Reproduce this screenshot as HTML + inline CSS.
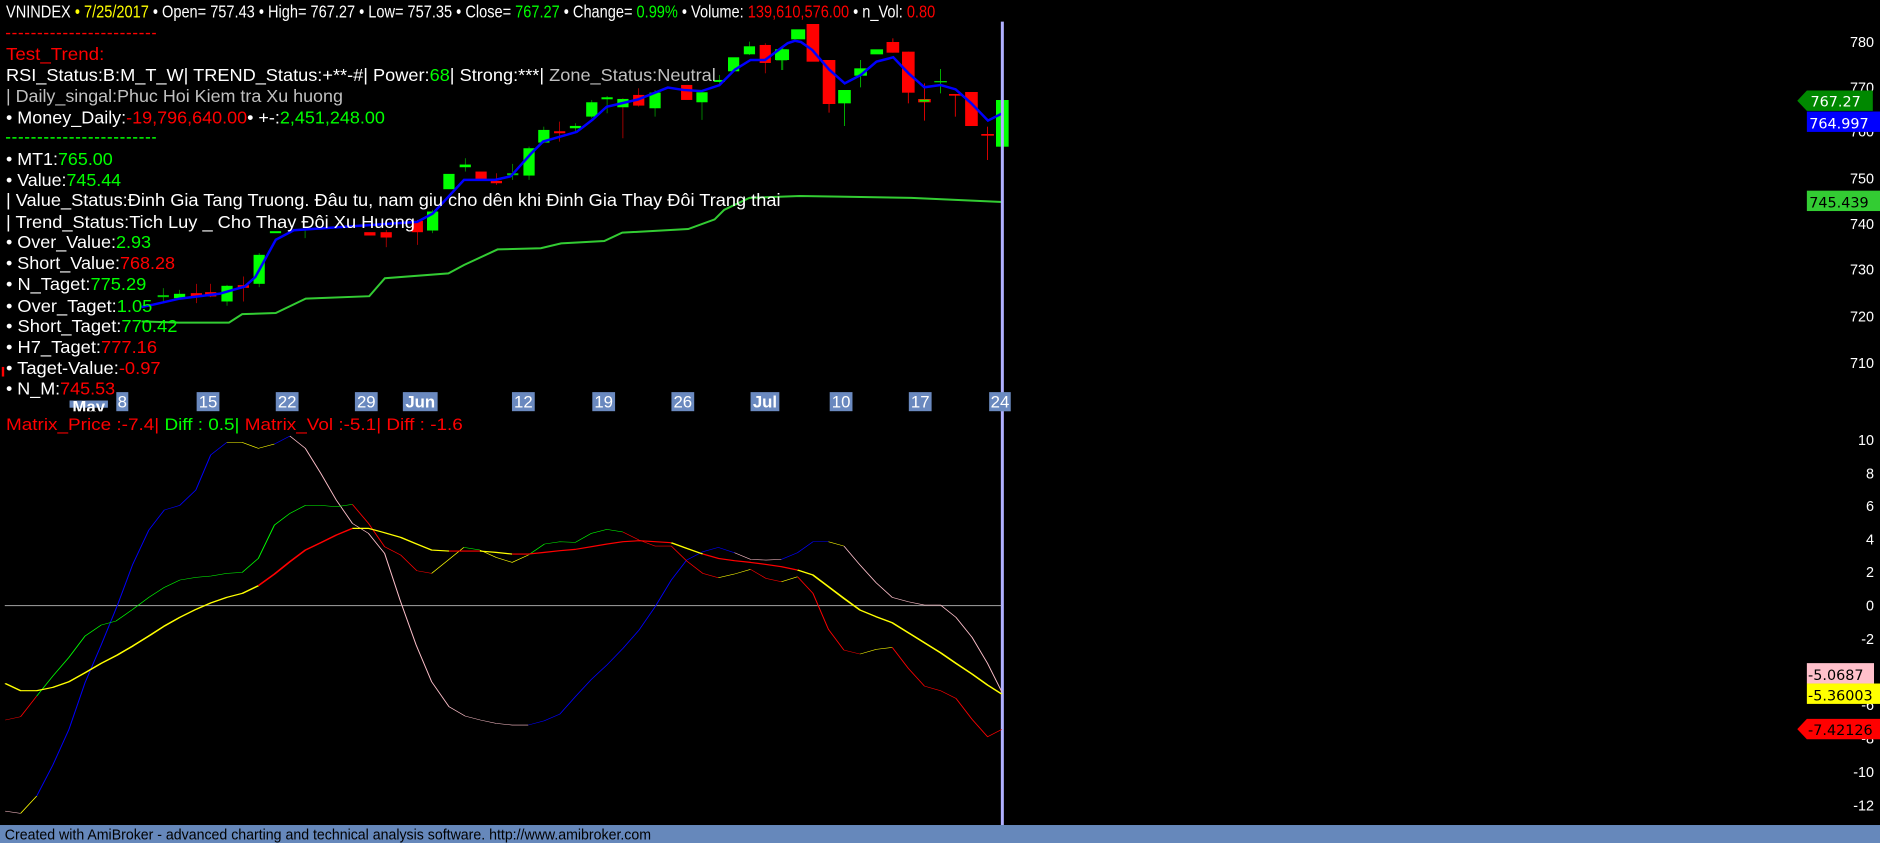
<!DOCTYPE html>
<html><head><meta charset="utf-8"><style>
html,body{margin:0;padding:0;background:#000;overflow:hidden}
svg{display:block}
text{font-family:"Liberation Sans",Arial,sans-serif}
.ax{font-family:"DejaVu Sans",sans-serif;font-size:12px;fill:#fff}
.w{fill:#fff}.g{fill:#00ff00}.r{fill:#ff0000}.y{fill:#ffff00}.gr{fill:#c0c0c0}
.ns{vector-effect:non-scaling-stroke;fill:none}
</style></head><body>
<svg width="1880" height="843" viewBox="0 0 1568 703" preserveAspectRatio="none" xmlns="http://www.w3.org/2000/svg">
<rect width="1568" height="703" fill="#000"/>

<polyline class="ns" stroke="#33cc33" stroke-width="2" points="118,268 149,269 191,269 202,262 230,261 255,249 308,247 321,232 374,228 387,221 415,208 451,207 468,203 504,201 519,194 574,191 596,183 604,175 625,165 667,163.5 700,164 760,165 836,168.5"/>

<g transform="scale(0.4255,0.2778)">
<g stroke-width="1.2" class="ns">
<line x1="320" y1="865" x2="320" y2="905" stroke="#00cc00"/>
<line x1="352" y1="870" x2="352" y2="897" stroke="#00cc00"/>
<line x1="385" y1="852" x2="385" y2="910" stroke="#ff0000"/>
<line x1="413" y1="852" x2="413" y2="892" stroke="#ff0000"/>
<line x1="445" y1="855" x2="445" y2="918" stroke="#00cc00"/>
<line x1="477" y1="830" x2="477" y2="905" stroke="#ff0000"/>
<line x1="508" y1="760" x2="508" y2="862" stroke="#00cc00"/>
<line x1="598" y1="690" x2="598" y2="715" stroke="#00cc00"/>
<line x1="757" y1="690" x2="757" y2="742" stroke="#ff0000"/>
<line x1="818" y1="660" x2="818" y2="735" stroke="#ff0000"/>
<line x1="848" y1="630" x2="848" y2="700" stroke="#00cc00"/>
<line x1="912" y1="475" x2="912" y2="515" stroke="#00cc00"/>
<line x1="973" y1="520" x2="973" y2="555" stroke="#ff0000"/>
<line x1="1005" y1="492" x2="1005" y2="540" stroke="#00cc00"/>
<line x1="1037" y1="440" x2="1037" y2="540" stroke="#00cc00"/>
<line x1="1066" y1="380" x2="1066" y2="430" stroke="#00cc00"/>
<line x1="1097" y1="365" x2="1097" y2="425" stroke="#ff0000"/>
<line x1="1128" y1="370" x2="1128" y2="400" stroke="#00cc00"/>
<line x1="1160" y1="300" x2="1160" y2="355" stroke="#00cc00"/>
<line x1="1190" y1="288" x2="1190" y2="340" stroke="#00cc00"/>
<line x1="1221" y1="295" x2="1221" y2="415" stroke="#ff0000"/>
<line x1="1252" y1="265" x2="1252" y2="320" stroke="#ff0000"/>
<line x1="1284" y1="270" x2="1284" y2="350" stroke="#00cc00"/>
<line x1="1376" y1="275" x2="1376" y2="360" stroke="#00cc00"/>
<line x1="1410" y1="225" x2="1410" y2="250" stroke="#00cc00"/>
<line x1="1469" y1="125" x2="1469" y2="165" stroke="#00cc00"/>
<line x1="1500" y1="130" x2="1500" y2="220" stroke="#ff0000"/>
<line x1="1532" y1="140" x2="1532" y2="210" stroke="#00cc00"/>
</g>
<g>
<rect x="309" y="886" width="22" height="6" fill="#00cc00"/>
<rect x="341" y="882" width="22" height="13" fill="#00ff00"/>
<rect x="374" y="880" width="22" height="10" fill="#ff0000"/>
<rect x="402" y="877" width="22" height="13" fill="#ff0000"/>
<rect x="434" y="858" width="22" height="47" fill="#00ff00"/>
<rect x="466" y="856" width="22" height="8" fill="#ff0000"/>
<rect x="497" y="765" width="22" height="87" fill="#00ff00"/>
<rect x="529" y="694" width="22" height="6" fill="#00ff00"/>
<rect x="714" y="697" width="22" height="10" fill="#ff0000"/>
<rect x="746" y="697" width="22" height="16" fill="#ff0000"/>
<rect x="807" y="663" width="22" height="34" fill="#ff0000"/>
<rect x="837" y="635" width="22" height="57" fill="#00ff00"/>
<rect x="869" y="522" width="22" height="46" fill="#00ff00"/>
<rect x="901" y="494" width="22" height="8" fill="#00ff00"/>
<rect x="932" y="515" width="22" height="25" fill="#ff0000"/>
<rect x="962" y="543" width="22" height="7" fill="#ff0000"/>
<rect x="994" y="520" width="22" height="6" fill="#00cc00"/>
<rect x="1026" y="445" width="22" height="82" fill="#00ff00"/>
<rect x="1055" y="390" width="22" height="38" fill="#00ff00"/>
<rect x="1086" y="394" width="22" height="6" fill="#ff0000"/>
<rect x="1117" y="378" width="22" height="7" fill="#00ff00"/>
<rect x="1149" y="307" width="22" height="43" fill="#00ff00"/>
<rect x="1179" y="292" width="22" height="6" fill="#00ff00"/>
<rect x="1210" y="297" width="22" height="25" fill="#00ff00"/>
<rect x="1241" y="285" width="22" height="32" fill="#ff0000"/>
<rect x="1273" y="278" width="22" height="47" fill="#00ff00"/>
<rect x="1335" y="255" width="22" height="45" fill="#ff0000"/>
<rect x="1365" y="277" width="22" height="30" fill="#00ff00"/>
<rect x="1399" y="240" width="22" height="6" fill="#00ff00"/>
<rect x="1427" y="172" width="22" height="42" fill="#00ff00"/>
<rect x="1458" y="139" width="22" height="24" fill="#00ff00"/>
<rect x="1489" y="135" width="22" height="54" fill="#ff0000"/>
<rect x="1521" y="148" width="22" height="33" fill="#00ff00"/>
</g>
</g>

<g transform="translate(650.5,0) scale(0.5851,0.278)">
<g class="ns" stroke-width="1.2">
<line x1="4" y1="140" x2="4" y2="210" stroke="#00cc00"/>
<line x1="70" y1="180" x2="70" y2="338" stroke="#ff0000"/>
<line x1="92" y1="270" x2="92" y2="378" stroke="#00cc00"/>
<line x1="115" y1="180" x2="115" y2="262" stroke="#00cc00"/>
<line x1="161" y1="115" x2="161" y2="158" stroke="#ff0000"/>
<line x1="183" y1="155" x2="183" y2="310" stroke="#ff0000"/>
<line x1="206" y1="250" x2="206" y2="362" stroke="#ff0000"/>
<line x1="229" y1="207" x2="229" y2="280" stroke="#00cc00"/>
<line x1="250" y1="283" x2="250" y2="350" stroke="#ff0000"/>
<line x1="296" y1="380" x2="296" y2="480" stroke="#ff0000"/>
</g>
<rect x="-7" y="148" width="20" height="32" fill="#00ff00"/>
<rect x="16" y="88" width="20" height="30" fill="#00ff00"/>
<rect x="38" y="72" width="18" height="113" fill="#ff0000"/>
<rect x="61" y="180" width="18" height="132" fill="#ff0000"/>
<rect x="83" y="270" width="18" height="40" fill="#00ff00"/>
<rect x="106" y="205" width="18" height="22" fill="#00ff00"/>
<rect x="129" y="148" width="18" height="15" fill="#00ff00"/>
<rect x="152" y="126" width="18" height="32" fill="#ff0000"/>
<rect x="174" y="155" width="18" height="123" fill="#ff0000"/>
<rect x="197" y="297" width="18" height="10" fill="#ff0000"/>
<rect x="199" y="299" width="14" height="6" fill="#00ff00"/>
<rect x="220" y="243" width="18" height="4" fill="#00cc00"/>
<rect x="241" y="282" width="18" height="5" fill="#ff0000"/>
<rect x="264" y="276" width="18" height="102" fill="#ff0000"/>
<rect x="287" y="402" width="18" height="5" fill="#ff0000"/>
<rect x="308" y="300" width="18" height="140" fill="#00ff00"/>
</g>

<polyline class="ns" stroke="#0000ff" stroke-width="2.5" points="118,256 128,254 150,249 183,245 204,239 213,231 230,200 245,192 348,185 361,178 387,150 413,150 426,147 443,128 453,118 481,110 494,100 506,89 532,83 557,73 570,75 585,76 600,71 613,58 626,50 638,50 657,36 663,34 668,35 677.5,41.7 691.5,58 704.5,69.5 718,62.5 731,51.4 745,47.8 757.6,61 771,72.8 784.5,70.9 797,74.5 810,86 824,100.6 836,94.5"/>

<line x1="836" y1="18" x2="836" y2="688" stroke="#b0b0ff" stroke-width="2.5"/>

<text x="5" y="14.5" font-size="15" textLength="775" lengthAdjust="spacingAndGlyphs"><tspan class="w">VNINDEX </tspan><tspan class="y">• 7/25/2017</tspan><tspan class="w"> • Open= 757.43 • High= 767.27 • Low= 757.35 • Close= </tspan><tspan class="g">767.27</tspan><tspan class="w"> • Change= </tspan><tspan class="g">0.99%</tspan><tspan class="w"> • Volume: </tspan><tspan class="r">139,610,576.00</tspan><tspan class="w"> • n_Vol: </tspan><tspan class="r">0.80</tspan></text>
<line x1="5" y1="28" x2="130" y2="28" stroke="#ff0000" stroke-width="1.2" stroke-dasharray="3.5,1.8"/>
<text x="5" y="50" font-size="15" class="r" textLength="82" lengthAdjust="spacingAndGlyphs">Test_Trend:</text>
<text x="5" y="67.5" font-size="15" textLength="592" lengthAdjust="spacingAndGlyphs"><tspan class="w">RSI_Status:B:M_T_W| TREND_Status:+**-#| Power:</tspan><tspan class="g">68</tspan><tspan class="w">| Strong:***| </tspan><tspan class="gr">Zone_Status:Neutral</tspan></text>
<text x="5" y="85" font-size="15" class="gr" textLength="281" lengthAdjust="spacingAndGlyphs">| Daily_singal:Phuc Hoi Kiem tra Xu huong</text>
<text x="5" y="103" font-size="15" textLength="316" lengthAdjust="spacingAndGlyphs"><tspan class="w">• Money_Daily:</tspan><tspan class="r">-19,796,640.00</tspan><tspan class="w">• +-:</tspan><tspan class="g">2,451,248.00</tspan></text>
<line x1="5" y1="115" x2="130" y2="115" stroke="#00ff00" stroke-width="1.2" stroke-dasharray="3.5,1.8"/>
<text x="5" y="137.5" font-size="15" textLength="89" lengthAdjust="spacingAndGlyphs"><tspan class="w">• MT1:</tspan><tspan class="g">765.00</tspan></text>
<text x="5" y="155" font-size="15" textLength="96" lengthAdjust="spacingAndGlyphs"><tspan class="w">• Value:</tspan><tspan class="g">745.44</tspan></text>
<text x="5" y="172" font-size="15" class="w" textLength="646" lengthAdjust="spacingAndGlyphs">| Value_Status:Đinh Gia Tang Truong. Đâu tu, nam giu cho dên khi Đinh Gia Thay Đôi Trang thai</text>
<text x="5" y="190" font-size="15" class="w" textLength="341" lengthAdjust="spacingAndGlyphs">| Trend_Status:Tich Luy _ Cho Thay Đôi Xu Huong</text>
<text x="5" y="207" font-size="15" textLength="121" lengthAdjust="spacingAndGlyphs"><tspan class="w">• Over_Value:</tspan><tspan class="g">2.93</tspan></text>
<text x="5" y="224.5" font-size="15" textLength="141" lengthAdjust="spacingAndGlyphs"><tspan class="w">• Short_Value:</tspan><tspan class="r">768.28</tspan></text>
<text x="5" y="242" font-size="15" textLength="117" lengthAdjust="spacingAndGlyphs"><tspan class="w">• N_Taget:</tspan><tspan class="g">775.29</tspan></text>
<text x="5" y="260" font-size="15" textLength="122" lengthAdjust="spacingAndGlyphs"><tspan class="w">• Over_Taget:</tspan><tspan class="g">1.05</tspan></text>
<text x="5" y="277" font-size="15" textLength="143" lengthAdjust="spacingAndGlyphs"><tspan class="w">• Short_Taget:</tspan><tspan class="g">770.42</tspan></text>
<text x="5" y="294.5" font-size="15" textLength="126" lengthAdjust="spacingAndGlyphs"><tspan class="w">• H7_Taget:</tspan><tspan class="r">777.16</tspan></text>
<text x="5" y="312" font-size="15" textLength="129" lengthAdjust="spacingAndGlyphs"><tspan class="w">• Taget-Value:</tspan><tspan class="r">-0.97</tspan></text>
<rect x="1.5" y="306" width="2" height="8" fill="#ff0000"/>
<text x="5" y="329" font-size="15" textLength="91" lengthAdjust="spacingAndGlyphs"><tspan class="w">• N_M:</tspan><tspan class="r">745.53</tspan></text>

<g fill="#6a89bf">
<rect x="58" y="334" width="32" height="6"/>
<rect x="97" y="327" width="10" height="16"/>
<rect x="164" y="327" width="19" height="16"/>
<rect x="230" y="327" width="19" height="16"/>
<rect x="296" y="327" width="19" height="16"/>
<rect x="336" y="327" width="29" height="16"/>
<rect x="427" y="327" width="19" height="16"/>
<rect x="494" y="327" width="19" height="16"/>
<rect x="560" y="327" width="19" height="16"/>
<rect x="626" y="327" width="24" height="16"/>
<rect x="692" y="327" width="19" height="16"/>
<rect x="758" y="327" width="19" height="16"/>
<rect x="825" y="327" width="18" height="16"/>
</g>
<g class="w" font-size="14" font-weight="bold" text-anchor="middle">
<text x="74" y="344">May</text>
<text x="102" y="340" font-weight="normal">8</text>
<text x="173.5" y="340" font-weight="normal">15</text>
<text x="239.5" y="340" font-weight="normal">22</text>
<text x="305.5" y="340" font-weight="normal">29</text>
<text x="350.5" y="340">Jun</text>
<text x="436.5" y="340" font-weight="normal">12</text>
<text x="503.5" y="340" font-weight="normal">19</text>
<text x="569.5" y="340" font-weight="normal">26</text>
<text x="638" y="340">Jul</text>
<text x="701.5" y="340" font-weight="normal">10</text>
<text x="767.5" y="340" font-weight="normal">17</text>
<text x="834" y="340" font-weight="normal">24</text>
</g>
<rect x="0" y="343" width="834" height="4" fill="#000"/>

<text x="5" y="358.5" font-size="14" textLength="381" lengthAdjust="spacingAndGlyphs"><tspan class="r">Matrix_Price :-7.4|   </tspan><tspan class="g">Diff : 0.5|</tspan><tspan class="r"> Matrix_Vol :-5.1|   Diff : -1.6</tspan></text>

<line x1="4" y1="505" x2="835" y2="505" stroke="#909090" stroke-width="1"/>

<g transform="translate(0,333.6) scale(0.5373,0.278)">
<g class="ns" stroke-width="1.6">
<polyline stroke="#ffc0cb" points="8,1233 32,1240"/>
<polyline stroke="#ffff00" points="32,1240 57,1188"/>
<polyline stroke="#0000ff" points="57,1188 82,1095 107,988 132,848 157,735 182,617 206,493 231,390 255,330 279,316 304,270 327,165 352,127"/>
<polyline stroke="#ffff00" points="352,127 376,127 401,145 426,132"/>
<polyline stroke="#0000ff" points="426,132 450,108"/>
<polyline stroke="#ffc0cb" points="450,108 474,145 498,220 522,300 547,370 572,400 597,460 621,600 646,735 670,845 697,920 722,948 746,960 770,970 795,975 820,975"/>
<polyline stroke="#0000ff" points="820,975 845,962 869,942 893,890 918,838 942,795 967,745 992,690 1017,620 1042,540 1066,480 1091,455 1115,442 1140,458"/>
<polyline stroke="#ffc0cb" points="1140,458 1165,478 1189,480 1213,478"/>
<polyline stroke="#0000ff" points="1213,478 1238,458 1262,425 1286,425"/>
<polyline stroke="#ffff00" points="1286,425 1310,438"/>
<polyline stroke="#ffc0cb" points="1310,438 1335,495 1360,548 1385,592 1410,605 1435,615 1460,615 1484,652 1509,712 1533,790 1555,875"/>
</g>
<g class="ns" stroke-width="1.6">
<polyline stroke="#ff0000" points="8,960 32,950 57,888"/>
<polyline stroke="#00ff00" points="57,888 82,828 107,772 132,708 157,675 180,663 206,628 231,592 255,562 279,540 304,532 328,528 352,520 376,517 401,475 426,375 450,340 474,316 498,316 522,320 547,313"/>
<polyline stroke="#ff0000" points="547,313 572,370 597,440 622,465 647,512 670,520"/>
<polyline stroke="#ffff00" points="670,520 697,478 720,442"/>
<polyline stroke="#00ff00" points="720,442 745,450"/>
<polyline stroke="#ffff00" points="745,450 770,472 795,487 820,465"/>
<polyline stroke="#00ff00" points="820,465 845,432 869,425 893,427 918,400 942,388 967,396"/>
<polyline stroke="#ff0000" points="967,396 992,420 1017,438 1042,438 1066,483 1091,520 1115,533"/>
<polyline stroke="#ffff00" points="1115,533 1140,522 1165,508"/>
<polyline stroke="#ff0000" points="1165,508 1189,535 1213,545"/>
<polyline stroke="#ffff00" points="1213,545 1238,530"/>
<polyline stroke="#ff0000" points="1238,530 1262,580 1286,688 1310,750 1335,762"/>
<polyline stroke="#ffff00" points="1335,762 1360,748 1385,742"/>
<polyline stroke="#ff0000" points="1385,742 1410,805 1435,858 1460,872 1484,895 1509,958 1533,1010 1555,988"/>
</g>
<g class="ns" stroke-width="3.5" stroke-linejoin="round">
<polyline stroke="#ffff00" points="8,850 32,872 57,872 82,862 107,845 132,818 157,790 182,765 206,738 231,708 255,678 279,652 304,628 328,608 352,592 376,580 401,557"/>
<polyline stroke="#ff0000" points="401,557 426,522 450,485 474,450 498,428 522,405 547,385"/>
<polyline stroke="#ffff00" points="547,385 572,385 597,398 622,412 647,432 670,450 697,453"/>
<polyline stroke="#ff0000" points="697,453 720,453 745,453"/>
<polyline stroke="#ffff00" points="745,453 770,457 795,462"/>
<polyline stroke="#ff0000" points="795,462 820,462 845,457 869,452 893,448 918,440 942,432 967,425 992,422 1017,425 1042,428"/>
<polyline stroke="#ffff00" points="1042,428 1066,445 1091,462"/>
<polyline stroke="#ff0000" points="1091,462 1115,475 1140,482 1165,487 1189,493 1213,500 1238,510"/>
<polyline stroke="#ffff00" points="1238,510 1262,525 1286,560 1310,595 1335,630 1360,650 1385,668 1410,698 1435,728 1460,758 1484,790 1509,822 1533,855 1555,882"/>
</g>
</g>

<g class="ax" text-anchor="end">
<text x="1563" y="39">780</text>
<text x="1563" y="77">770</text>
<text x="1563" y="114">760</text>
<text x="1563" y="153">750</text>
<text x="1563" y="191">740</text>
<text x="1563" y="229">730</text>
<text x="1563" y="268">720</text>
<text x="1563" y="307">710</text>
<text x="1563" y="371">10</text>
<text x="1563" y="399">8</text>
<text x="1563" y="426">6</text>
<text x="1563" y="454">4</text>
<text x="1563" y="481">2</text>
<text x="1563" y="509">0</text>
<text x="1563" y="537">-2</text>
<text x="1563" y="592">-6</text>
<text x="1563" y="620">-8</text>
<text x="1563" y="648">-10</text>
<text x="1563" y="676">-12</text>
</g>
<polygon points="1499,84 1507,75.5 1562,75.5 1562,92.5 1507,92.5" fill="#008800"/>
<text x="1510" y="89" class="ax">767.27</text>
<rect x="1507" y="93" width="61" height="17" fill="#0000ff"/>
<text x="1509" y="107" class="ax">764.997</text>
<rect x="1507" y="159" width="61" height="17" fill="#33cc33"/>
<text x="1509" y="173" class="ax" style="fill:#000">745.439</text>
<rect x="1507" y="553" width="56" height="17" fill="#ffc0cb"/>
<text x="1508" y="567" class="ax" style="fill:#000">-5.0687</text>
<rect x="1507" y="570" width="61" height="17" fill="#ffff00"/>
<text x="1508" y="584" class="ax" style="fill:#000">-5.36003</text>
<polygon points="1499,608 1507,599.5 1568,599.5 1568,616.5 1507,616.5" fill="#ff0000"/>
<text x="1508" y="613" class="ax" style="fill:#000">-7.42126</text>

<rect x="0" y="688" width="1568" height="15" fill="#6688bb"/>
<text x="4" y="700" font-size="12.5" fill="#000" textLength="539" lengthAdjust="spacingAndGlyphs">Created with AmiBroker - advanced charting and technical analysis software. http://www.amibroker.com</text>
</svg>
</body></html>
